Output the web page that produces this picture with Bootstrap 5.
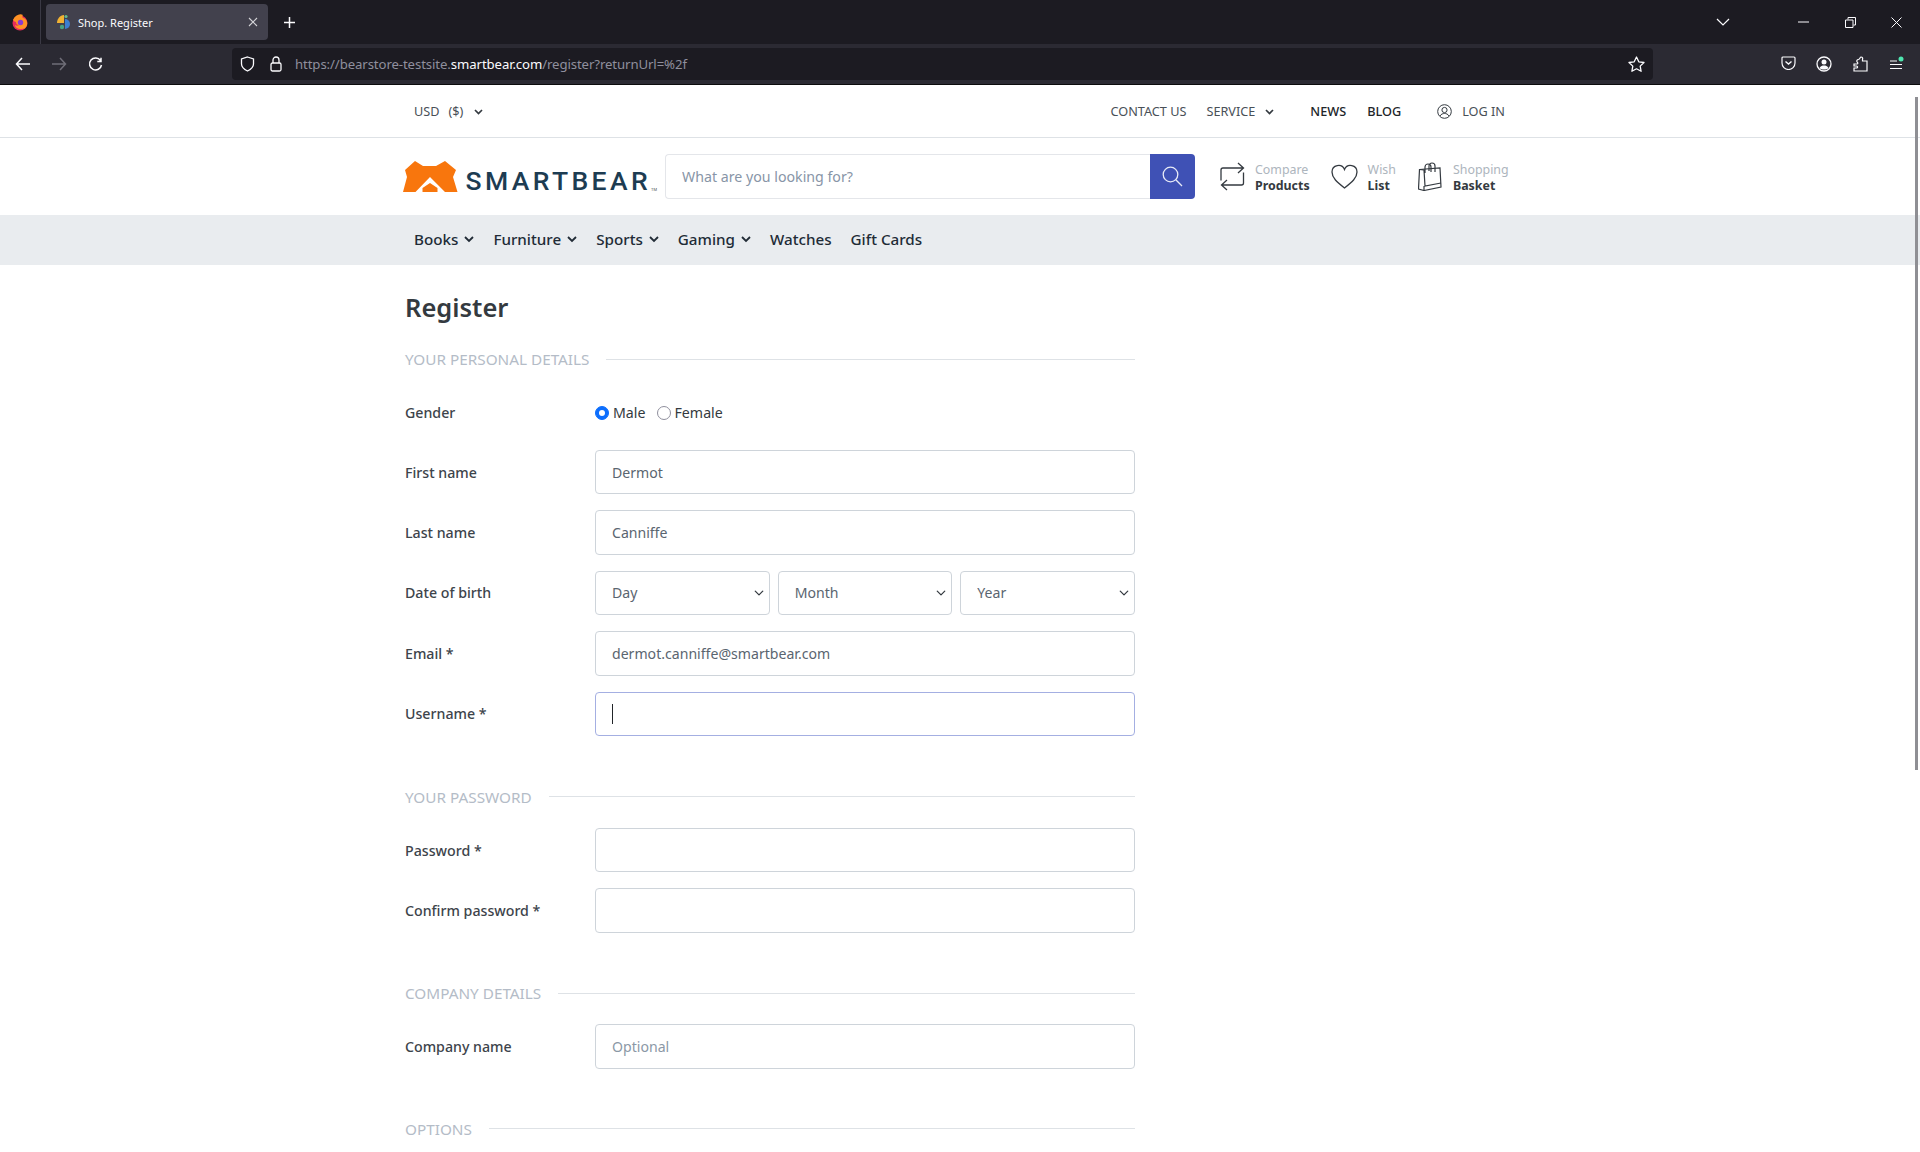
<!DOCTYPE html>
<html lang="en">
<head>
<meta charset="utf-8">
<title>Shop. Register</title>
<link href="https://cdn.jsdelivr.net/npm/bootstrap@5.3.0/dist/css/bootstrap.min.css" rel="stylesheet">
<style>
html,body{height:1152px;overflow:hidden;background:#fff}
body{font-family:"Noto Sans","Open Sans",sans-serif;font-size:14.5px;color:#343a40;position:relative}
svg{display:block;flex:none}
.ff-tabs{height:44px;background:#1c1b22;color:#fbfbfe}
.ff-menu{width:40px}
.ff-sep{width:1px;height:44px;background:#3a3944;margin-right:5px}
.ff-tab{width:222px;height:36px;background:#42414d;border-radius:4px;padding:0 10px;font:11px "Noto Sans",sans-serif}
.ff-tab-title{margin-left:6px}
.ff-plus{margin-left:15px}
.ff-caption{margin-left:auto}
.ff-chev{margin-right:51px}
.ff-win{width:46.5px}
.ff-toolbar{height:41px;background:#2b2a33;border-bottom:1px solid #0c0c0d}
.ff-nav{width:36px}
.ff-nav-first{width:31px}
.ff-url{width:1421px;height:32px;background:#1c1b22;border-radius:4px;margin-left:128.5px;padding:0 8px;font:13.2px "Noto Sans",sans-serif;color:#8f8f9d}
.ff-url b{font-weight:400;color:#fbfbfe}
.ff-url .addr{margin-left:13.5px;white-space:nowrap;letter-spacing:-.1px}
.ff-lock{margin-left:15px}
.ff-star{margin-left:auto}
.ff-right{margin-left:auto;padding-right:6px}
.ff-right>div{width:36px}
.site-wrap{width:1140px;margin:0 auto;padding:0 15px}
.top-bar{height:53px;padding-top:2px;border-bottom:1px solid #dee2e6;font-size:12.7px;color:#495057}
.top-pad{padding-right:25px}
.chev{margin-left:6px}
.usd{margin-left:9px}
.usd-gap{margin-left:9px}
.chev-usd{margin-left:11px}
.chev-srv{margin-left:10px}
.top-links strong{font-weight:500;color:#212529}
.t-service{margin-left:20px}
.t-news{margin-left:36px}
.t-blog{margin-left:21px}
.t-login{margin-left:36px}
.t-logtxt{margin-left:10px}
.head-row{height:77px}
.logo-box{width:260px;margin-left:-2px;color:#1d3c52}
.logo-word{font:500 26.5px/1 Roboto,sans-serif;letter-spacing:3.4px;margin-left:7.5px;margin-top:9px}
.logo-tm{font:400 4px/1 Roboto,sans-serif;margin-top:27px;margin-left:0;color:#555}
.search-box{width:530px;height:45px;margin-left:2px}
.search-box .form-control{height:45px;border-radius:4px 0 0 4px;border-color:#e4e6ea;border-right:0;padding-left:16px;font-size:14.2px}
.search-box .form-control::placeholder{color:#8895a7}
.search-btn{flex:none;width:45px;height:45px;background:#3f51b5;border-radius:0 4px 4px 0;border:0;padding:0}
.tool-item{line-height:16px;font-size:12.4px;color:#adb5bd}
.tool-item strong{display:block;font-weight:700;color:#343a40}
.tool-one{margin-left:25px}
.tool-two{margin-left:21px}
.tool-three{margin-left:22px}
.tool-text{margin-left:10px;margin-top:2px}
.tool-three .tool-text{margin-left:11px}
.main-nav{height:50px;background:#e9ecef}
.nav-item-x{font-size:15.2px;font-weight:500;color:#212b36;white-space:nowrap;padding-bottom:2px}
.nav-first{margin-left:9px}
.nav-gap{margin-left:19px}
.reg-form{width:730px}
.page-h{font-size:25.5px;font-weight:600;line-height:34px;margin:25px 0 0;color:#343a40}
.sect{font-size:15.3px;line-height:20px;color:#b4bcc7;text-transform:uppercase}
.sect i{flex:1;height:1px;background:#dee2e6;margin-left:17px}
.s-first{margin-top:25px;margin-bottom:32px}
.s-pass{margin-top:51px;margin-bottom:21px}
.s-comp{margin-top:50.4px;margin-bottom:21px}
.s-opt{margin-top:50px}
.frow{min-height:44.4px;margin-bottom:16px}
.frow-radio{min-height:24px;margin-bottom:25px}
.flabel{width:190px;font-size:14.2px;font-weight:500;color:#3d444b;flex:none}
.form-control.fi,.form-select.fi{height:44.4px;font-size:14.1px;border-color:#ced4da;border-radius:4px;padding-left:16px;color:#5a6570}
.form-control.fi::placeholder{color:#8b98a6}
.form-select.fi{background-position:right 4px center;background-size:12px 10px}
.form-control.focused{border-color:#a4afe2}
.fwrap{position:relative;flex:1}
.caret-lay{position:absolute;left:17px;top:12px;width:1px;height:20px;background:#212529}
.rad{gap:11px;font-size:14.2px}
.rad .form-check{margin:0;min-height:0;padding-left:18px;line-height:20px}
.rad .form-check-input{width:14px;height:14px;margin-top:3px;margin-left:-18px;border:1.5px solid #8f8f9d}
.rad .form-check-input:checked{background-color:#0d6efd;border-color:#0d6efd}
.page-scroll{position:absolute;right:2px;top:97px;width:3px;height:673px;background:#8f8f94}
</style>
</head>
<body>
<div class="ff-tabs d-flex align-items-center">
  <div class="ff-menu d-flex justify-content-center">
    <svg width="18" height="18" viewBox="0 0 18 18"><circle cx="9" cy="10" r="7.5" fill="#e92d5a"/><path d="M2 7C4 2 9 0 12 2c-1 1-1 2 0 3 2 0 5 3 4 7-1 3-3 4-6 4-4 0-6-2-6-4 1 1 3 1 4 0-2 0-3-1-3-3-1 0-2-1-3-2z" fill="#ff9224"/><circle cx="9.500" cy="9.500" r="2.700" fill="#8a3bd1"/></svg>
  </div>
  <div class="ff-sep"></div>
  <div class="ff-tab d-flex align-items-center">
    <svg width="16" height="16" viewBox="0 0 16 16"><path d="M1 9C1 5 4 1 8 1v8z" fill="#f2b233"/><path d="M9 5a5 5 0 0 1 0 10z" fill="#3c7fd1"/><circle cx="10" cy="2.5" r="1.6" fill="#62b98e"/><circle cx="6" cy="13" r="2.2" fill="#49a383"/></svg>
    <span class="ff-tab-title">Shop. Register</span>
    <svg class="ms-auto" width="10" height="10" viewBox="0 0 10 10"><path d="M1 1l8 8M9 1l-8 8" stroke="#d4d4d8" stroke-width="1.1"/></svg>
  </div>
  <svg class="ff-plus" width="13" height="13" viewBox="0 0 13 13"><path d="M6.5 1v11M1 6.5h11" stroke="#fbfbfe" stroke-width="1.5"/></svg>
  <div class="ff-caption d-flex align-items-center">
    <svg class="ff-chev" width="14" height="8" viewBox="0 0 14 8"><path d="M1 1l6 6 6-6" fill="none" stroke="#fbfbfe" stroke-width="1.2"/></svg>
    <div class="ff-win d-flex justify-content-center"><svg width="11" height="2" viewBox="0 0 11 2"><path d="M0 1h11" stroke="#fbfbfe"/></svg></div>
    <div class="ff-win d-flex justify-content-center"><svg width="11" height="11" viewBox="0 0 11 11"><path d="M3 2.500V.5h7.500V8H8.500M.5 3h7.500v7.500H.5z" fill="none" stroke="#fbfbfe"/></svg></div>
    <div class="ff-win d-flex justify-content-center"><svg width="11" height="11" viewBox="0 0 11 11"><path d="M.5.5l10 10M10.500.5l-10 10" stroke="#fbfbfe"/></svg></div>
  </div>
</div>
<div class="ff-toolbar d-flex align-items-center">
  <div class="ff-nav ff-nav-first d-flex justify-content-end"><svg width="16" height="14" viewBox="0 0 16 14"><path d="M7 1L1.500 7 7 13M2 7h13" fill="none" stroke="#fbfbfe" stroke-width="1.500"/></svg></div>
  <div class="ff-nav d-flex justify-content-end"><svg width="16" height="14" viewBox="0 0 16 14"><path d="M9 1l5.500 6L9 13M14 7H1" fill="none" stroke="#6f6e78" stroke-width="1.500"/></svg></div>
  <div class="ff-nav d-flex justify-content-end"><svg width="15" height="15" viewBox="0 0 15 15"><path d="M12.500 3.500A6 6 0 1 0 13.500 8M13 .8v3.700H9.300" fill="none" stroke="#fbfbfe" stroke-width="1.500"/></svg></div>
  <div class="ff-url d-flex align-items-center">
    <svg width="15" height="16" viewBox="0 0 15 16"><path d="M7.500 1l6 2v5c0 3-3 5.500-6 7-3-1.500-6-4-6-7V3z" fill="none" stroke="#fbfbfe" stroke-width="1.300"/></svg>
    <svg class="ff-lock" width="12" height="16" viewBox="0 0 12 16"><path d="M3 7V4a3 3 0 0 1 6 0v3" fill="none" stroke="#fbfbfe" stroke-width="1.300"/><rect x="1" y="7" width="10" height="8" rx="1.500" fill="none" stroke="#fbfbfe" stroke-width="1.300"/></svg>
    <span class="addr">https://bearstore-testsite.<b>smartbear.com</b>/register?returnUrl=%2f</span>
    <svg class="ff-star" width="17" height="16" viewBox="0 0 17 16"><path d="M8.500 1l2.300 4.800 5.200.7-3.800 3.600.9 5.200-4.600-2.500-4.600 2.500.9-5.200L1 6.500l5.200-.7z" fill="none" stroke="#fbfbfe" stroke-width="1.300" stroke-linejoin="round"/></svg>
  </div>
  <div class="ff-right d-flex">
    <div class="d-flex justify-content-center"><svg width="15" height="14" viewBox="0 0 15 14"><path d="M1 2a1 1 0 0 1 1-1h11a1 1 0 0 1 1 1v5a6.500 6.500 0 0 1-13 0z" fill="none" stroke="#fbfbfe" stroke-width="1.200"/><path d="M4.500 5.500l3 2.500 3-2.500" fill="none" stroke="#fbfbfe" stroke-width="1.400"/></svg></div>
    <div class="d-flex justify-content-center"><svg width="16" height="16" viewBox="0 0 16 16"><circle cx="8" cy="8" r="7" fill="none" stroke="#fbfbfe" stroke-width="1.300"/><circle cx="8" cy="6" r="2.500" fill="#fbfbfe"/><path d="M3.500 12c1-2 3-2.500 4.500-2.500s3.500.5 4.500 2.500c-2 2-7 2-9 0z" fill="#fbfbfe"/></svg></div>
    <div class="d-flex justify-content-center"><svg width="15" height="16" viewBox="0 0 15 16"><path d="M1 8h3c1 0 1-1 .5-1.500C3 5 4 3.500 5.500 3.500 7 3.500 7 1 8 1c1.500 0 2 1 1.500 2.500V5H14v10H1v-3h2.500c1.500 0 1.500-2 0-2H1z" fill="none" stroke="#fbfbfe" stroke-width="1.200"/></svg></div>
    <div class="d-flex justify-content-center"><svg width="15" height="15" viewBox="0 0 15 15"><path d="M1 5h7M1 8.500h12M1 12.500h12" stroke="#fbfbfe" stroke-width="1.200"/><circle cx="12" cy="3" r="2.500" fill="#4ee6b0"/></svg></div>
  </div>
</div>

<div class="top-bar">
  <div class="site-wrap h-100 d-flex align-items-center top-pad">
    <span class="usd">USD</span><span class="usd-gap">($)</span>
    <svg class="chev-usd" width="9" height="6" viewBox="0 0 9 6"><path d="M1 1l3.500 3.500L8 1" fill="none" stroke="#343a40" stroke-width="1.700"/></svg>
    <div class="ms-auto d-flex align-items-center top-links">
      <span>CONTACT US</span>
      <span class="t-service">SERVICE</span>
      <svg class="chev-srv" width="9" height="6" viewBox="0 0 9 6"><path d="M1 1l3.500 3.500L8 1" fill="none" stroke="#343a40" stroke-width="1.700"/></svg>
      <strong class="t-news">NEWS</strong>
      <strong class="t-blog">BLOG</strong>
      <svg class="t-login" width="15" height="15" viewBox="0 0 15 15"><circle cx="7.500" cy="7.500" r="6.800" fill="none" stroke="#343a40" stroke-width="1"/><circle cx="7.500" cy="6" r="2.600" fill="none" stroke="#343a40" stroke-width="1"/><path d="M3 12c1-2 3-2.500 4.500-2.500S11 10 12 12" fill="none" stroke="#343a40"/></svg>
      <span class="t-logtxt">LOG IN</span>
    </div>
  </div>
</div>

<div class="site-wrap head-row d-flex align-items-center">
  <div class="logo-box d-flex align-items-center">
    <svg width="55" height="31" viewBox="0 0 55 31"><path d="M0 31L4 16 2 9 12 0l8 5h13l9-5 11 9-3 7 4.500 15z" fill="#f8760d"/><path d="M12.500 31L27 16l15 15h-7.500v-4L27 22l-7.500 5v4z" fill="#fff"/></svg>
    <span class="logo-word">SMARTBEAR</span><span class="logo-tm">TM</span>
  </div>
  <div class="search-box d-flex">
    <input class="form-control" type="text" placeholder="What are you looking for?">
    <button class="search-btn d-flex align-items-center justify-content-center" type="button" aria-label="Search">
      <svg width="21" height="21" viewBox="0 0 21 21"><circle cx="8.500" cy="8.500" r="7.300" fill="none" stroke="#e8ebf7" stroke-width="1.300"/><path d="M13.800 13.800l6.200 6.200" stroke="#e8ebf7" stroke-width="1.300"/></svg>
    </button>
  </div>
  <div class="d-flex align-items-center tool-item tool-one">
    <svg width="25" height="29" viewBox="0 0 25 29"><path d="M1 18.500V8a2 2 0 0 1 2-2h20M18 1l5.500 5L18 11" fill="none" stroke="#343a40" stroke-width="1.300"/><path d="M23.500 10.500V21a2 2 0 0 1-2 2H1.500M7 18l-5.500 5L7 28" fill="none" stroke="#343a40" stroke-width="1.300"/></svg>
    <div class="tool-text">Compare<strong>Products</strong></div>
  </div>
  <div class="d-flex align-items-center tool-item tool-two">
    <svg width="27" height="25" viewBox="0 0 27 25"><path d="M13.500 24C6 18 1 14 1 8a6.500 6.500 0 0 1 12.500-2.500A6.500 6.500 0 0 1 26 8c0 6-5 10-12.500 16z" fill="none" stroke="#343a40" stroke-width="1.300"/></svg>
    <div class="tool-text">Wish<strong>List</strong></div>
  </div>
  <div class="d-flex align-items-center tool-item tool-three">
    <svg width="24" height="29" viewBox="0 0 24 29"><path d="M1.500 7.500L22 6l1 19-17 3.500-5.500-1.500z" fill="none" stroke="#343a40" stroke-width="1.200"/><path d="M1.500 7.500L6 8l1 16 16-3M6 28.500V24M7 11V5a3 3 0 0 1 6 0v5M11 9V4a3 3 0 0 1 6 0v6" fill="none" stroke="#343a40" stroke-width="1.200"/></svg>
    <div class="tool-text">Shopping<strong>Basket</strong></div>
  </div>
</div>

<div class="main-nav">
  <div class="site-wrap h-100 d-flex align-items-center nav-item-x">
    <span class="nav-first">Books</span><svg class="chev" width="10" height="7" viewBox="0 0 10 7"><path d="M1 1l4 4 4-4" fill="none" stroke="#212b36" stroke-width="1.800"/></svg>
    <span class="nav-gap">Furniture</span><svg class="chev" width="10" height="7" viewBox="0 0 10 7"><path d="M1 1l4 4 4-4" fill="none" stroke="#212b36" stroke-width="1.800"/></svg>
    <span class="nav-gap">Sports</span><svg class="chev" width="10" height="7" viewBox="0 0 10 7"><path d="M1 1l4 4 4-4" fill="none" stroke="#212b36" stroke-width="1.800"/></svg>
    <span class="nav-gap">Gaming</span><svg class="chev" width="10" height="7" viewBox="0 0 10 7"><path d="M1 1l4 4 4-4" fill="none" stroke="#212b36" stroke-width="1.800"/></svg>
    <span class="nav-gap">Watches</span>
    <span class="nav-gap">Gift Cards</span>
  </div>
</div>

<div class="site-wrap">
  <form class="reg-form" onsubmit="return false">
    <h1 class="page-h">Register</h1>
    <div class="sect s-first d-flex align-items-center"><span>Your personal details</span><i></i></div>
    <div class="frow-radio d-flex align-items-center">
      <label class="flabel">Gender</label>
      <div class="rad d-flex">
        <div class="form-check"><input class="form-check-input" type="radio" name="g" checked id="gm"><label for="gm">Male</label></div>
        <div class="form-check"><input class="form-check-input" type="radio" name="g" id="gf"><label for="gf">Female</label></div>
      </div>
    </div>
    <div class="frow d-flex align-items-center"><label class="flabel">First name</label><input class="form-control fi" value="Dermot"></div>
    <div class="frow d-flex align-items-center"><label class="flabel">Last name</label><input class="form-control fi" value="Canniffe"></div>
    <div class="frow d-flex align-items-center"><label class="flabel">Date of birth</label>
      <div class="d-flex gap-2 flex-grow-1">
        <select class="form-select fi"><option>Day</option></select>
        <select class="form-select fi"><option>Month</option></select>
        <select class="form-select fi"><option>Year</option></select>
      </div>
    </div>
    <div class="frow d-flex align-items-center"><label class="flabel">Email *</label><input class="form-control fi" value="dermot.canniffe@smartbear.com"></div>
    <div class="frow d-flex align-items-center"><label class="flabel">Username *</label>
      <div class="fwrap"><input class="form-control fi focused"><div class="caret-lay"></div></div>
    </div>
    <div class="sect s-pass d-flex align-items-center"><span>Your password</span><i></i></div>
    <div class="frow d-flex align-items-center"><label class="flabel">Password *</label><input class="form-control fi" type="password"></div>
    <div class="frow d-flex align-items-center"><label class="flabel">Confirm password *</label><input class="form-control fi" type="password"></div>
    <div class="sect s-comp d-flex align-items-center"><span>Company details</span><i></i></div>
    <div class="frow d-flex align-items-center"><label class="flabel">Company name</label><input class="form-control fi" placeholder="Optional"></div>
    <div class="sect s-opt d-flex align-items-center"><span>Options</span><i></i></div>
  </form>
</div>
<div class="page-scroll"></div>
</body>
</html>
